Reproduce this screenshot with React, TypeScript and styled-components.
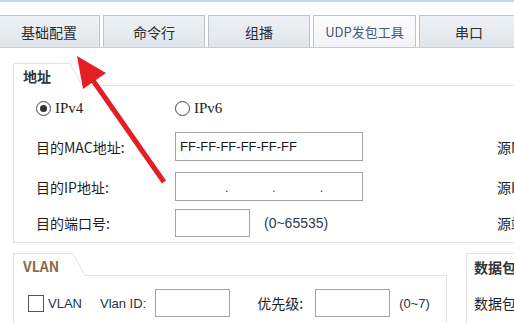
import React from 'react';
import styled, { createGlobalStyle } from 'styled-components';

const GlobalStyle = createGlobalStyle`
  html, body {
    margin: 0;
    padding: 0;
    background: #ffffff;
    overflow: hidden;
  }
`;

const Window = styled.div`
  position: relative;
  width: 514px;
  height: 323px;
  overflow: hidden;
  background: #ffffff;
  font-family: "Noto Sans CJK SC", "Noto Sans", sans-serif;
  color: #222;
`;

const TopStrip = styled.div`
  height: 2px;
  background: #c8d4e1;
  margin-bottom: 13px;
`;

const TabBar = styled.div`
  display: flex;
  gap: 3px;
  margin-left: -2px;
  height: 32px;
  border-bottom: 1px solid #c9cdd2;
`;

const Tab = styled.div<{ active?: boolean; w: number }>`
  width: ${p => p.w}px;
  flex: none;
  box-sizing: border-box;
  display: flex;
  align-items: center;
  justify-content: center;
  border: 1px solid #bcc4cc;
  border-bottom: none;
  background: ${p => p.active
    ? 'linear-gradient(#fbfcfd, #f1f4f7)'
    : 'linear-gradient(#eef2f6, #dfe5eb)'};
  color: ${p => p.active ? '#4a5874' : '#2d2d2d'};
  font-size: ${p => p.active ? '13px' : '14px'};
`;

const Content = styled.div`
  padding-left: 13px;
  padding-top: 15px;
`;

const Group = styled.div<{ w?: number }>`
  width: ${p => p.w ? `${p.w}px` : 'auto'};
  flex: none;
  box-sizing: border-box;
`;

const GroupHead = styled.div`
  display: flex;
  height: 23px;
`;

const GroupLabel = styled.div<{ tone?: string; w: number }>`
  width: ${p => p.w}px;
  box-sizing: border-box;
  border-top: 1px solid #e3e3e3;
  border-left: 1px solid #e3e3e3;
  padding: 2px 0 0 9px;
  font-size: 14px;
  font-weight: bold;
  color: ${p => p.tone || '#333'};
  white-space: nowrap;
`;

const Slant = styled.svg`
  flex: none;
  width: 14px;
  height: 23px;
`;

const HeadFill = styled.div`
  flex: 1;
  border-bottom: 1px solid #e3e3e3;
`;

const GroupBody = styled.div<{ open?: boolean }>`
  border-left: 1px solid #e3e3e3;
  border-bottom: ${p => p.open ? 'none' : '1px solid #e3e3e3'};
`;

const AddrGrid = styled.div`
  display: grid;
  grid-template-columns: 139px 322px 200px;
  align-items: center;
  padding: 14px 0 5px 22px;
`;

const RadioItem = styled.label`
  display: flex;
  align-items: center;
  gap: 4px;
  height: 17px;
  margin-bottom: 15px;
  font-family: "Liberation Serif", serif;
  font-size: 15px;
  color: #1c1c1c;
`;

const RadioDot = styled.span<{ checked?: boolean }>`
  width: 13px;
  height: 13px;
  border-radius: 50%;
  border: 1px solid #444;
  display: flex;
  align-items: center;
  justify-content: center;
  &::after {
    content: '';
    width: 7px;
    height: 7px;
    border-radius: 50%;
    background: ${p => p.checked ? '#333' : 'transparent'};
  }
`;

const Label = styled.span<{ gapBelow: number }>`
  font-size: 14px;
  color: #1e1e1e;
  margin-bottom: ${p => p.gapBelow}px;
  white-space: nowrap;
`;

const InputRow = styled.div<{ gapBelow: number }>`
  display: flex;
  align-items: center;
  gap: 14px;
  margin-bottom: ${p => p.gapBelow}px;
`;

const Field = styled.div<{ w: number; h: number }>`
  width: ${p => p.w}px;
  height: ${p => p.h}px;
  box-sizing: border-box;
  border: 1px solid #a3a3a3;
  background: #fff;
  display: flex;
  align-items: center;
  padding-left: 4px;
  font-family: "Liberation Sans", "Noto Sans", sans-serif;
  font-size: 13px;
  color: #1a1a1a;
`;

const IpDots = styled.div`
  display: flex;
  padding-left: 45px;
  gap: 44px;
  font-size: 12px;
  color: #333;
  padding-top: 3px;
`;

const Range = styled.span`
  font-family: "Liberation Sans", sans-serif;
  font-size: 14px;
  color: #2f3a52;
`;

const LowerRow = styled.div`
  display: flex;
  margin-top: 10px;
`;

const VlanRow = styled.div`
  display: flex;
  align-items: center;
  padding: 13px 0 20px 14px;
`;

const Check = styled.span`
  width: 16px;
  height: 17px;
  box-sizing: border-box;
  border: 1px solid #555;
  background: #fff;
  margin-right: 4px;
`;

const SmallText = styled.span<{ ml?: number; mr?: number }>`
  font-family: "Liberation Sans", sans-serif;
  font-size: 13px;
  color: #24324c;
  margin-left: ${p => p.ml || 0}px;
  margin-right: ${p => p.mr || 0}px;
  white-space: nowrap;
`;

const CnText = styled.span<{ ml?: number; mr?: number }>`
  font-size: 14px;
  color: #1e1e1e;
  margin-left: ${p => p.ml || 0}px;
  margin-right: ${p => p.mr || 0}px;
  white-space: nowrap;
`;

const SideGroup = styled.div`
  margin-left: 19px;
  flex: 1;
  border-left: 1px solid #e3e3e3;
  border-top: 1px solid #e3e3e3;
  padding: 3px 0 0 7px;
  height: 80px;
`;

const SideTitle = styled.div`
  font-size: 14px;
  font-weight: bold;
  color: #333;
  white-space: nowrap;
  margin-bottom: 16px;
`;

const SideText = styled.div`
  font-size: 14px;
  color: #1e1e1e;
  white-space: nowrap;
`;

const VlanBody = styled(GroupBody)`
  border-right: 1px solid #e3e3e3;
  height: 60px;
`;

const Arrow = styled.svg`
  position: absolute;
  left: 0;
  top: 0;
  pointer-events: none;
`;

const tabs = [
  { label: '基础配置', w: 102 },
  { label: '命令行', w: 102 },
  { label: '组播', w: 102 },
  { label: 'UDP发包工具', w: 103, active: true },
  { label: '串口', w: 100 }
];

const SlantLine: React.FC = () => (
  <Slant viewBox="0 0 14 23">
    <polyline points="0,0.5 1,0.5 13,22.5 14,22.5" fill="none" stroke="#e3e3e3" strokeWidth="1" />
  </Slant>
);

const App: React.FC = () => {
  return (
    <Window>
      <GlobalStyle />
      <TopStrip />
      <TabBar>
        {tabs.map(t => (
          <Tab key={t.label} w={t.w} active={t.active}>{t.label}</Tab>
        ))}
      </TabBar>

      <Content>
        <Group>
          <GroupHead>
            <GroupLabel w={56}>地址</GroupLabel>
            <SlantLine />
            <HeadFill />
          </GroupHead>
          <GroupBody>
            <AddrGrid>
              <RadioItem><RadioDot checked />IPv4</RadioItem>
              <RadioItem><RadioDot />IPv6</RadioItem>
              <span />

              <Label gapBelow={11}>目的MAC地址:</Label>
              <InputRow gapBelow={11}>
                <Field w={188} h={29}>FF-FF-FF-FF-FF-FF</Field>
              </InputRow>
              <Label gapBelow={11}>源MAC地址:</Label>

              <Label gapBelow={8}>目的IP地址:</Label>
              <InputRow gapBelow={8}>
                <Field w={188} h={29}>
                  <IpDots><span>.</span><span>.</span><span>.</span></IpDots>
                </Field>
              </InputRow>
              <Label gapBelow={8}>源IP地址:</Label>

              <Label gapBelow={0}>目的端口号:</Label>
              <InputRow gapBelow={0}>
                <Field w={75} h={28} />
                <Range>(0~65535)</Range>
              </InputRow>
              <Label gapBelow={0}>源端口号:</Label>
            </AddrGrid>
          </GroupBody>
        </Group>

        <LowerRow>
          <Group w={434}>
            <GroupHead>
              <GroupLabel w={59} tone="#8d6b4b">VLAN</GroupLabel>
              <SlantLine />
              <HeadFill />
            </GroupHead>
            <VlanBody open>
              <VlanRow>
                <Check />
                <SmallText mr={18}>VLAN</SmallText>
                <SmallText mr={9}>Vlan ID:</SmallText>
                <Field w={75} h={28} />
                <CnText ml={27} mr={12}>优先级:</CnText>
                <Field w={75} h={28} />
                <SmallText ml={9}>(0~7)</SmallText>
              </VlanRow>
            </VlanBody>
          </Group>
          <SideGroup>
            <SideTitle>数据包设置</SideTitle>
            <SideText>数据包长度:</SideText>
          </SideGroup>
        </LowerRow>
      </Content>

      <Arrow width="514" height="323" viewBox="0 0 514 323">
        <line x1="164" y1="182" x2="92" y2="79" stroke="#e41e25" strokeWidth="5" />
        <polygon points="77,56 106,73 83,89" fill="#e41e25" />
      </Arrow>
    </Window>
  );
};

export default App;
